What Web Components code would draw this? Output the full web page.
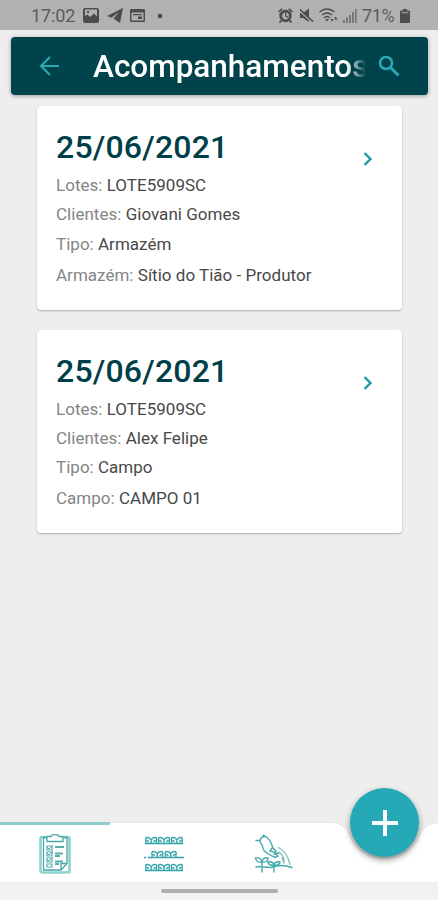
<!DOCTYPE html>
<html lang="pt-BR">
<head>
<meta charset="utf-8">
<title>Acompanhamentos</title>
<style>
html, body { margin: 0; height: 100%; background: #eee; }
body { font-family: Roboto, "Liberation Sans", sans-serif; overflow: hidden; }
</style>
</head>
<body>
<app-screen></app-screen>
<script>
const define = (name, html) => {
  const template = document.createElement('template');
  template.innerHTML = html;
  customElements.define(name, class extends HTMLElement {
    constructor() {
      super();
      this.attachShadow({ mode: 'open' }).append(template.content.cloneNode(true));
    }
  });
};

define('status-bar', `
<style>
:host { display: flex; align-items: center; height: 30px; flex: none; box-sizing: border-box; padding: 1px 28px 0 31px; background: #b1b1b1; color: #5c5c5c; font-size: 18px; line-height: 30px; }
svg { display: block; fill: #4c4c4c; flex: none; }
.time { width: 52px; letter-spacing: -.1px; }
.left, .right { display: flex; align-items: center; }
.left { gap: 8px; flex: 1; }
.right { gap: 6px; }
.pct { letter-spacing: -.4px; width: 34px; margin-left: -1px; }
</style>
<span class="time">17:02</span>
<div class="left">
  <svg width="16" height="15" viewBox="0 0 16 15"><path fill-rule="evenodd" d="M2 0h12a2 2 0 0 1 2 2v11a2 2 0 0 1-2 2H2a2 2 0 0 1-2-2V2a2 2 0 0 1 2-2zm0 1.500v6.500l2.500-1.500 2.500 2.500 4-3.500 3 3V1.500zM4 3h2v2H4z"/></svg>
  <svg width="16" height="15" viewBox="0 0 16 15"><path d="M16 0 0 8l4.500 1.800L12 4 6.500 10.500 13 15z"/></svg>
  <svg width="15" height="13" viewBox="0 0 15 13" style="margin-left:-1px"><path fill-rule="evenodd" d="M1 0h13a1 1 0 0 1 1 1v11a1 1 0 0 1-1 1H1a1 1 0 0 1-1-1V1a1 1 0 0 1 1-1zm.5 3.500v8h12v-8zM3 5h9v1.200H3zM8 7.500h4V10H8z"/></svg>
  <svg width="6" height="6" viewBox="0 0 6 6" style="margin-left:4px"><circle cx="3" cy="3" r="2.300"/></svg>
</div>
<div class="right">
  <svg width="15" height="15" viewBox="0 0 15 15"><path d="M0 3.500 3.500.300l1.300 1L1.300 4.600zM15 3.500 11.500.300l-1.300 1 3.500 3.300zM2 12l2 1-1.500 2L1 14.500zM13 12l-2 1 1.500 2 1.500-.5z"/><circle cx="7.500" cy="8" r="4.800" fill="none" stroke="#4c4c4c" stroke-width="2.800"/><path d="M7 4.800h1.300v3l2.300 1.200-.6 1.100L7 8.600z"/></svg>
  <svg width="15" height="15" viewBox="0 0 15 15"><path d="M1 5h3l6-4.500V14L4 10H1z"/><path d="M0 2.500 12.500 14" stroke="#b1b1b1" stroke-width="1.200"/><path d="m1 1.500 13 12" stroke="#4c4c4c" stroke-width="1.700"/></svg>
  <svg width="19" height="15" viewBox="0 0 19 15" fill="none" stroke="#4c4c4c" stroke-width="1.400" style="margin-left:-1px"><path fill="none" d="M.5 4Q8-2 15.500 4M3 7q5-4 10 0M5 10q3-3 6 0"/><path d="M6 11h4l-2 2.500z" stroke="none"/><path d="M11.500 11h3L13 14zM15 11.500h3.500L16.700 8.500z" stroke="none"/></svg>
  <svg width="14" height="14" viewBox="0 0 14 14" style="margin-left:-1px"><path fill="#777" d="M0 11h2v3H0zM3 8.500h2V14H3zM6 6h2v8H6z"/><path fill="#777" d="M9 3h2v11H9zM12 0h1.700v14H12z"/></svg>
  <span class="pct">71%</span>
  <svg width="10" height="14" viewBox="0 0 10 14" style="margin-left:-2px"><path d="M3 0h4v1.500h2a1 1 0 0 1 1 1V13a1 1 0 0 1-1 1H1a1 1 0 0 1-1-1V2.500a1 1 0 0 1 1-1h2z"/><path fill="#8a8a8a" d="M1.500 2.800h7v1.700h-7z"/></svg>
</div>`);

define('title-bar', `
<style>
:host { display: flex; align-items: center; flex: none; height: 58px; margin: 7px 10px 0 11px; box-sizing: border-box; padding: 0 28px; border-radius: 4px; background: #00434a; box-shadow: 0 1px 4px rgba(0,0,0,.35); color: #fff; }
svg { display: block; flex: none; fill: none; stroke: #2ba9b5; stroke-width: 2.100; }
.title { flex: none; width: 272px; margin-left: 33px; font-size: 31.500px; font-weight: 500; line-height: 60px; height: 58px; white-space: nowrap; overflow: hidden; -webkit-mask-image: linear-gradient(90deg, #000 254px, transparent 273px); mask-image: linear-gradient(90deg, #000 254px, transparent 273px); }
.find { margin-left: 13px; }
</style>
<svg width="21" height="20" viewBox="0 0 21 20"><path d="M20 10H2M11 1 2 10l9 9"/></svg>
<span class="title"><slot></slot></span>
<svg class="find" width="22" height="22" viewBox="0 0 22 22"><circle cx="8" cy="8" r="6" stroke-width="2.500"/><path d="m12.500 12.500 8 8" stroke-width="3"/></svg>`);

define('visit-card', `
<style>
:host { display: flex; justify-content: space-between; height: 203.500px; flex: none; box-sizing: border-box; padding: 21px 28px 0 19px; background: #fff; border-radius: 4px; box-shadow: 0 1px 2px rgba(0,0,0,.27); }
.date { font-size: 32px; line-height: 41px; font-weight: 500; letter-spacing: .2px; color: #003f47; white-space: nowrap; }
.rows { display: flex; flex-direction: column; }
svg { display: block; margin-top: 24px; }
</style>
<div><div class="date"><slot name="date"></slot></div><div class="rows"><slot></slot></div></div>
<svg width="11" height="16" viewBox="0 0 11 16" fill="none" stroke="#2199a6" stroke-width="2.400"><path d="m1.500 2 6 6-6 6"/></svg>`);

define('card-field', `
<style>
:host { display: block; height: 29.300px; line-height: 35px; font-size: 17px; letter-spacing: .02px; color: #484848; white-space: nowrap; }
:host([last]) { margin-top: 2px; }
.label { color: #858585; }
</style>
<span class="label"><slot name="label"></slot></span> <slot></slot>`);

define('add-button', `
<style>
:host { display: flex; align-items: center; justify-content: center; width: 69px; height: 69px; border-radius: 50%; background: #25a9b6; box-shadow: 0 3px 6px rgba(0,0,0,.42); }
</style>
<svg width="28" height="28" viewBox="0 0 28 28"><path d="M14 1v26M1 14h26" stroke="#fff" stroke-width="4"/></svg>`);

define('bottom-nav', `
<style>
:host { display: block; position: relative; height: 60px; flex: none; }
.shape { position: absolute; inset: 0; display: block; filter: drop-shadow(0 -1px 1px rgba(0,0,0,.03)); }
.tabs { position: relative; display: grid; grid-template-columns: repeat(3, 109.500px); height: 60px; }
.tab { display: flex; align-items: center; justify-content: center; box-sizing: border-box; border-top: 3px solid transparent; }
.tab.on { border-color: #8fcccc; }
.tab svg { display: block; fill: none; }
add-button { position: absolute; left: 350px; top: -34px; }
</style>
<svg class="shape" width="438" height="60" viewBox="0 0 438 60"><path fill="#fff" d="M0 1H333Q343 2 348 11C354 27 366 37 384.500 37S415 27 421 11Q426 2 438 1V60H0z"/></svg>
<div class="tabs">
  <div class="tab on"><svg width="32" height="40" viewBox="0 0 32 40">
    <path d="M7 3H3.500Q1.500 3 1.500 5V36Q1.500 38.500 3.500 38.500H24L30.500 38V5Q30.500 3 28.500 3H25" stroke="#8ed3ce" stroke-width="2.600"/>
    <path d="M8 3.500H4.500V36H22L28 29.500V3.500H24M8 2.500h4L13 .8h6l1 1.700h4V7.500H8zM22 36V29.500h6" stroke="#4aa5a7" stroke-width="1.300"/>
    <path d="M8 12h5v4H8zM8 18h5v4H8zM8 24h5v4H8zM8 30h5v3H8z" stroke="#55adad" stroke-width="1.200"/>
    <path d="m8 13 2 2 4-4M8 19l2 2 4-4M8 25l2 2 4-4" stroke="#55adad"/>
    <path d="M16 13h9M16 19.500h8M16 22h5M16 27.500h8M16 30h4" stroke="#55adad" stroke-width="1.800"/>
  </svg></div>
  <div class="tab"><svg width="40" height="36" viewBox="0 0 42 36" preserveAspectRatio="none" stroke="#32a3a9" stroke-width="1.400">
    <defs><g id="p"><path d="M1 7V5Q0 2 2 1.500Q5 1 6.500 4Q8 1 11 1.500Q13 2 12 5V7M2 4l2 2M11 4 9 6M6.500 4v3"/></g></defs>
    <use href="#p" x="1"/><use href="#p" x="14.500"/><use href="#p" x="28"/><path d="M1 7.500h40"/>
    <use href="#p" x="7.500" y="14"/><use href="#p" x="21.500" y="14"/><path d="M0 21.500h2M4 21.500h38"/>
    <use href="#p" x="1" y="27"/><use href="#p" x="14.500" y="27"/><use href="#p" x="28" y="27"/><path d="M1 34.500h40"/>
  </svg></div>
  <div class="tab"><svg width="40" height="40" viewBox="0 0 40 40" stroke="#43aaae" stroke-width="1.400" stroke-linecap="round">
    <path d="M2 6.500h4Q7 3 10 2.500L9 .8 13 3.500Q16 6 17.500 10L19 14l3 3-1 2 3 3-3 1.500-3-1.500-5-3Q9 17 8.500 12L6 7.500M18 14l-2 3 4 1M20 20l5-1"/>
    <path d="M24.500 13.500q9 5 11.500 17M25 18q5 3 5 10M28 24l2 5" stroke="#83bfbd"/>
    <path d="M2 33q4-1 7 0l8 .5q10-4 21 0M8 38V28Q2 29 1.500 24 7 23 8 28q1-5 6-4 0 5-6 4M20 38V31Q15 32 14 28q5-1 6 3 1-4 6-3-1 4-6 3"/>
  </svg></div>
</div>
<add-button></add-button>`);

define('app-screen', `
<style>
:host { display: flex; flex-direction: column; width: 438px; height: 900px; background: #eee; overflow: hidden; }
main { flex: 1; display: flex; flex-direction: column; gap: 20px; padding: 11px 36.500px 0 37px; }
.home { flex: none; height: 18px; display: flex; align-items: center; justify-content: center; background: #f2f2f2; }
.pill { width: 117px; height: 4px; border-radius: 2px; background: #afafaf; }
</style>
<status-bar></status-bar>
<title-bar>Acompanhamentos</title-bar>
<main>
  <visit-card>
    <span slot="date">25/06/2021</span>
    <card-field><span slot="label">Lotes:</span>LOTE5909SC</card-field>
    <card-field><span slot="label">Clientes:</span>Giovani Gomes</card-field>
    <card-field><span slot="label">Tipo:</span>Armazém</card-field>
    <card-field last><span slot="label">Armazém:</span>Sítio do Tião - Produtor</card-field>
  </visit-card>
  <visit-card>
    <span slot="date">25/06/2021</span>
    <card-field><span slot="label">Lotes:</span>LOTE5909SC</card-field>
    <card-field><span slot="label">Clientes:</span>Alex Felipe</card-field>
    <card-field><span slot="label">Tipo:</span>Campo</card-field>
    <card-field last><span slot="label">Campo:</span>CAMPO 01</card-field>
  </visit-card>
</main>
<bottom-nav></bottom-nav>
<div class="home"><div class="pill"></div></div>`);
</script>
</body>
</html>
